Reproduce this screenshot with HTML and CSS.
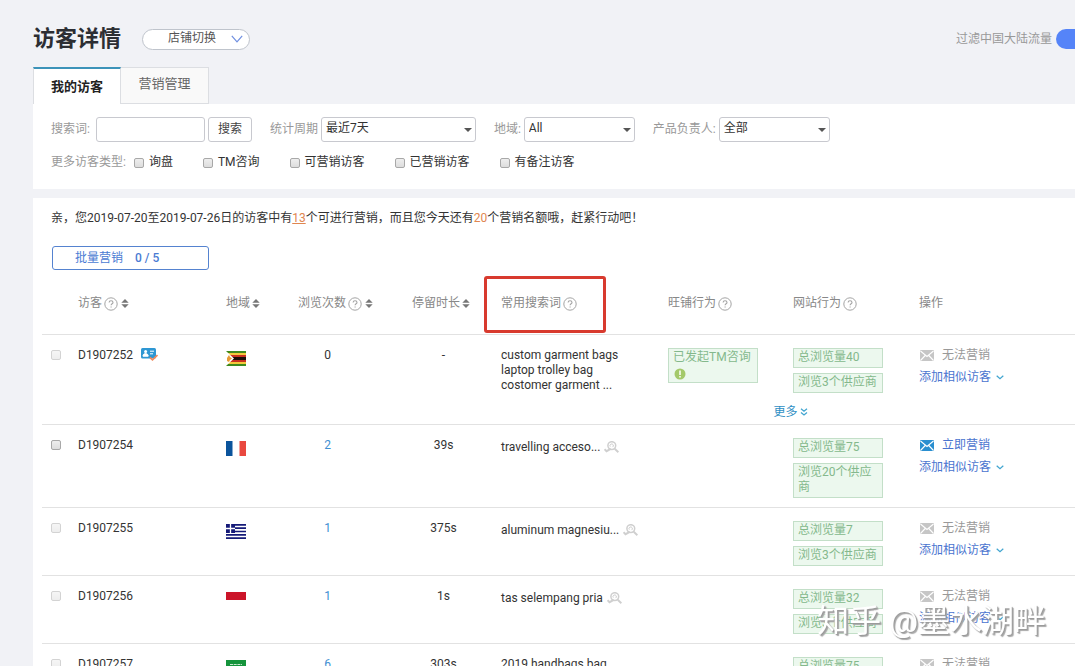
FILE: index.html
```html
<!DOCTYPE html>
<html lang="zh-CN">
<head>
<meta charset="utf-8">
<title>访客详情</title>
<link rel="stylesheet" href="styles.css">
</head>
<body>
<svg class="sprite" aria-hidden="true">
  <symbol id="help" viewBox="0 0 14 14"><circle cx="7" cy="7" r="6.200" fill="none" stroke="#a4a4a4"/><path d="M5.1 5.600c0-2.600 3.900-2.400 3.900-.2 0 1.400-1.900 1.400-1.900 2.900M7.100 9.500v1" fill="none" stroke="#a4a4a4" stroke-width="1.100"/></symbol>
  <symbol id="sort" viewBox="0 0 8 9"><path d="M4 0l3.700 3.800H.3zM4 9L.3 5.200h7.400z" fill="#777"/></symbol>
  <symbol id="mail" viewBox="0 0 14 11"><rect width="14" height="11" rx="1" fill="currentColor"/><path d="M.5 1l6.500 5.500L13.500 1M.5 10.500l4.700-5M13.500 10.500l-4.700-5" fill="none" stroke="#fff" stroke-width="1.100"/></symbol>
  <symbol id="chev" viewBox="0 0 8 5"><path d="M.7.7L4 3.800 7.300.7" fill="none" stroke="#41a5d0" stroke-width="1.200"/></symbol>
  <symbol id="lookup" viewBox="0 0 15 12"><g fill="none" stroke="#cfcfcf"><circle cx="7.800" cy="4.600" r="3.900" stroke-width="1.500"/><path d="M10.700 7.700l3.700 3.500" stroke-width="1.900"/><path d="M6.300 5.600a1.700 1.700 0 1 1 2.200.5" stroke-width="1"/><path d="M.5 8.200l2 2 4.300-2.300" stroke-width="2"/></g></symbol>
</svg>

<header class="page-head">
  <h1 class="title">访客详情</h1>
  <button class="shop-switch" type="button"><span>店铺切换</span>
    <svg width="12" height="8" viewBox="0 0 12 8"><path d="M.8.8L6 6.800 11.200.8" fill="none" stroke="#6f8fe0" stroke-width="1.200"/></svg>
  </button>
  <label class="flow-filter"><span>过滤中国大陆流量</span><input class="toggle" type="checkbox" role="switch" checked></label>
</header>

<nav class="tabs">
  <a class="tab tab-on" href="#mine">我的访客</a>
  <a class="tab" href="#manage">营销管理</a>
</nav>

<form class="panel filters">
  <div class="filter-row">
    <div class="field">
      <label for="kw">搜索词:</label>
      <div class="search"><input class="box" id="kw" type="text"><button class="box search-btn" type="button">搜索</button></div>
    </div>
    <div class="field tight"><label for="period">统计周期</label><select class="box period" id="period"><option>最近7天</option></select></div>
    <div class="field tight"><label for="region">地域:</label><select class="box" id="region"><option>All</option></select></div>
    <div class="field tight"><label for="owner">产品负责人:</label><select class="box" id="owner"><option>全部</option></select></div>
  </div>
  <fieldset class="types">
    <legend>更多访客类型:</legend>
    <label><input class="check" type="checkbox">询盘</label>
    <label><input class="check" type="checkbox">TM咨询</label>
    <label><input class="check" type="checkbox">可营销访客</label>
    <label><input class="check" type="checkbox">已营销访客</label>
    <label><input class="check" type="checkbox">有备注访客</label>
  </fieldset>
</form>

<main class="panel visitors">
  <p class="notice">亲，您2019-07-20至2019-07-26日的访客中有<a href="#ready">13</a>个可进行营销，而且您今天还有<em>20</em>个营销名额哦，赶紧行动吧！</p>
  <button class="batch" type="button"><span>批量营销</span><b>0 / 5</b></button>

  <table class="grid">
    <colgroup><col class="c-check"><col class="c-id"><col class="c-flag"><col class="c-views"><col class="c-stay"><col class="c-words"><col class="c-shop"><col class="c-site"><col></colgroup>
    <thead>
      <tr>
        <th></th>
        <th><span class="head">访客<svg class="i-help"><use href="#help"/></svg><svg class="i-sort"><use href="#sort"/></svg></span></th>
        <th><span class="head">地域<svg class="i-sort"><use href="#sort"/></svg></span></th>
        <th><span class="head">浏览次数<svg class="i-help"><use href="#help"/></svg><svg class="i-sort"><use href="#sort"/></svg></span></th>
        <th><span class="head">停留时长<svg class="i-sort"><use href="#sort"/></svg></span></th>
        <th class="marked"><span class="head">常用搜索词<svg class="i-help"><use href="#help"/></svg></span></th>
        <th><span class="head">旺铺行为<svg class="i-help"><use href="#help"/></svg></span></th>
        <th><span class="head">网站行为<svg class="i-help"><use href="#help"/></svg></span></th>
        <th><span class="head">操作</span></th>
      </tr>
    </thead>
    <tbody>
      <tr class="has-more">
        <td><input class="check" type="checkbox" aria-label="D1907252" disabled></td>
        <td><span class="visitor">D1907252
          <svg width="17" height="13" viewBox="0 0 17 13"><rect y="0" width="15" height="10.500" rx="1.500" fill="#2e97d3"/><circle cx="4.600" cy="3.500" r="1.500" fill="#fff"/><path d="M2 8.200c0-3.600 5.200-3.600 5.200 0zM9 3.200h4M9 5.800h3" fill="#fff" stroke="#fff"/><path d="M9 9.500l2.500 2.300 5-4.800" fill="none" stroke="#f08a5d" stroke-width="1.700"/></svg></span></td>
        <td><svg class="flag" viewBox="0 0 20 15"><path fill="#3f8a1e" d="M0 0h20v15H0z"/><path fill="#f4c93c" d="M2 2h18v11H2z"/><path fill="#c8321f" d="M4 4h16v7H4z"/><path fill="#1b0d08" d="M5 6h15v3H5z"/><path fill="#fff" d="M0 0l8 7.500L0 15z"/><path fill="#e79b35" d="M1 7l2-3 1 2 2 1.500L4 9l-1 2-2-1z"/></svg></td>
        <td class="views">0</td>
        <td class="stay">-</td>
        <td>custom garment bags<br>laptop trolley bag<br>costomer garment ...</td>
        <td colspan="2">
          <div class="actions">
            <div class="tags"><span class="tag">已发起TM咨询<svg class="alert" viewBox="0 0 12 12"><circle cx="6" cy="6" r="5.500" fill="#a4c96a"/><path d="M6 2.500v4.500M6 8v1.500" stroke="#fff" stroke-width="1.500"/></svg></span></div>
            <div class="tags"><span class="tag">总浏览量40</span><span class="tag">浏览3个供应商</span></div>
          </div>
          <a class="more" href="#more">更多<svg width="8" height="8" viewBox="0 0 8 8"><path d="M1 .8l3 2.400L7 .8M1 4.500l3 2.400 3-2.400" fill="none" stroke="#41a5d0" stroke-width="1.300"/></svg></a>
        </td>
        <td><div class="op off"><svg class="i-mail"><use href="#mail"/></svg>无法营销</div><a class="add" href="#add">添加相似访客<svg class="i-chev"><use href="#chev"/></svg></a></td>
      </tr>
      <tr>
        <td><input class="check" type="checkbox" aria-label="D1907254"></td>
        <td>D1907254</td>
        <td><svg class="flag" viewBox="0 0 20 15"><path fill="#fff" d="M0 0h20v15H0z"/><path fill="#0b549c" d="M0 0h6.500v15H0z"/><path fill="#e9483f" d="M13.500 0H20v15h-6.500z"/></svg></td>
        <td class="views"><a href="#views">2</a></td>
        <td class="stay">39s</td>
        <td><span class="word">travelling acceso...<svg class="i-look"><use href="#lookup"/></svg></span></td>
        <td></td>
        <td><div class="tags"><span class="tag">总浏览量75</span><span class="tag">浏览20个供应商</span></div></td>
        <td><a class="op" href="#send"><svg class="i-mail"><use href="#mail"/></svg>立即营销</a><a class="add" href="#add">添加相似访客<svg class="i-chev"><use href="#chev"/></svg></a></td>
      </tr>
      <tr>
        <td><input class="check" type="checkbox" aria-label="D1907255" disabled></td>
        <td>D1907255</td>
        <td><svg class="flag" viewBox="0 0 20 15"><path fill="#fff" d="M0 0h20v15H0z"/><path stroke="#151a78" stroke-width="1.700" d="M0 .8h20M0 4.200h20M0 7.500h20M0 10.800h20M0 14.200h20"/><path fill="#151a78" d="M0 0h9v9H0z"/><path stroke="#fff" stroke-width="1.300" d="M4.500 0v9M0 4.500h9"/></svg></td>
        <td class="views"><a href="#views">1</a></td>
        <td class="stay">375s</td>
        <td><span class="word">aluminum magnesiu...<svg class="i-look"><use href="#lookup"/></svg></span></td>
        <td></td>
        <td><div class="tags"><span class="tag">总浏览量7</span><span class="tag">浏览3个供应商</span></div></td>
        <td><div class="op off"><svg class="i-mail"><use href="#mail"/></svg>无法营销</div><a class="add" href="#add">添加相似访客<svg class="i-chev"><use href="#chev"/></svg></a></td>
      </tr>
      <tr>
        <td><input class="check" type="checkbox" aria-label="D1907256" disabled></td>
        <td>D1907256</td>
        <td><svg class="flag" viewBox="0 0 20 15"><path fill="#fff" d="M0 0h20v15H0z"/><path fill="#cb1429" d="M0 0h20v8H0z"/></svg></td>
        <td class="views"><a href="#views">1</a></td>
        <td class="stay">1s</td>
        <td><span class="word">tas selempang pria<svg class="i-look"><use href="#lookup"/></svg></span></td>
        <td></td>
        <td><div class="tags"><span class="tag">总浏览量32</span><span class="tag">浏览3个供应商</span></div></td>
        <td><div class="op off"><svg class="i-mail"><use href="#mail"/></svg>无法营销</div><a class="add" href="#add">添加相似访客<svg class="i-chev"><use href="#chev"/></svg></a></td>
      </tr>
      <tr>
        <td><input class="check" type="checkbox" aria-label="D1907257" disabled></td>
        <td>D1907257</td>
        <td><svg class="flag" viewBox="0 0 20 15"><path fill="#15943c" d="M0 0h20v15H0z"/><path d="M4 4.500h12M5 6.500h10M5 11h10" stroke="#c9e8d0" stroke-dasharray="3 .7"/></svg></td>
        <td class="views"><a href="#views">6</a></td>
        <td class="stay">303s</td>
        <td>2019 handbags bag</td>
        <td></td>
        <td><div class="tags"><span class="tag">总浏览量75</span></div></td>
        <td><div class="op off"><svg class="i-mail"><use href="#mail"/></svg>无法营销</div></td>
      </tr>
    </tbody>
  </table>
</main>
<div class="watermark">知乎 @墨水湖畔</div>
</body>
</html>
```
FILE: styles.css
```css
*, *::after { box-sizing: border-box; }
html { scrollbar-width: none; }
body {
  margin: 0;
  padding-left: 33px;
  overflow-x: hidden;
  background: #f1f2f6;
  color: #333;
  font: 12px/15px Roboto, "Noto Sans CJK SC", sans-serif;
}
a { color: #4a74cf; text-decoration: none; }
button, input, select { font: inherit; color: inherit; margin: 0; }
button { cursor: pointer; }
svg { display: block; flex: none; }
.sprite { position: absolute; width: 0; height: 0; }

.page-head { display: flex; align-items: center; padding-top: 22px; height: 56px; }
.title { margin: 0; font-size: 22px; line-height: 32px; color: #2c2e33; }
.shop-switch {
  display: flex; align-items: center; justify-content: flex-end; gap: 15px;
  width: 108px; height: 21px; margin-left: 21px; padding: 0 6px;
  border: 1px solid #bfc4cc; border-radius: 11px; background: #fff; color: #555;
}
.shop-switch span { padding-bottom: 2px; }
.flow-filter { display: flex; align-items: center; gap: 4px; margin-left: auto; margin-right: -19px; color: #999; }
.toggle { appearance: none; width: 38px; height: 20px; border-radius: 10px; background: #5584f8; }

.tabs { display: flex; align-items: flex-end; margin-top: 11px; }
.tab {
  width: 88px; height: 37px; padding-bottom: 4px;
  display: flex; align-items: center; justify-content: center;
  border: 1px solid #dcdee2; border-left: 0;
  background: #f9f9f9; color: #666; font-size: 13px;
}
.tab-on { padding-bottom: 0; border-left: 1px solid #dcdee2; border-bottom: 0; border-top: 2px solid #3c93b9; background: #fff; color: #222; font-weight: bold; }

.panel { background: #fff; }
.filters { padding: 13px 18px 19px; }
.filter-row { display: flex; flex-wrap: wrap; gap: 18px; color: #999; }
.field { display: flex; align-items: center; gap: 6px; }
.tight { gap: 3px; }
.search { display: flex; gap: 3px; }
.box { width: 111px; height: 25px; border: 1px solid #c8c9cf; border-radius: 3px; background: #fff; color: #333; }
.search .box { width: 109px; }
.search .search-btn { width: 44px; padding: 0; color: #444; }
.box:is(select) {
  appearance: none; padding: 0 4px 3px;
  background: url("data:image/svg+xml,%3Csvg xmlns='http://www.w3.org/2000/svg' width='8' height='4'%3E%3Cpath d='M0 0h8L4 4z' fill='%23555'/%3E%3C/svg%3E") no-repeat right 3px top 10px;
}
.period { width: 155px; }
.types { display: flex; flex-wrap: wrap; gap: 30px; margin: 13px 0 0; padding: 0; border: 0; }
.types legend { float: left; margin-right: -22px; padding: 0; color: #999; }
.types label { display: flex; align-items: center; gap: 5px; }
.check {
  appearance: none; display: block; width: 10px; height: 10px;
  border: 1px solid #a8a8a8; border-radius: 2px; background: linear-gradient(#eee, #ddd);
}
.check:disabled { opacity: 0.5; }

.visitors { margin-top: 9px; padding: 13px 0 0 9px; }
.notice { margin: 0 0 20px 9px; }
.notice a { color: #e08650; text-decoration: underline; }
.notice em { color: #e08650; font-style: normal; }
.batch {
  display: flex; align-items: center; gap: 12px; width: 157px; height: 24px;
  margin: 0 0 4px 10px; padding: 0 22px;
  border: 1px solid #5583d0; border-radius: 3px; background: #fff; color: #4a7bd3;
}
.batch b { font-weight: 500; }

.grid { width: 100%; table-layout: fixed; border-collapse: collapse; }
.c-check { width: 26px; }
.c-id { width: 148px; }
.c-flag { width: 72px; }
.c-views { width: 114px; }
.c-stay { width: 89px; }
.c-words { width: 167px; }
.c-shop { width: 125px; }
.c-site { width: 126px; }
th, td { padding: 13px 0 9px 9px; text-align: left; vertical-align: top; border-bottom: 1px solid #e2e2e2; }
td + td, th + th { padding-left: 10px; }
th { height: 60px; padding-block: 0; vertical-align: middle; color: #888; font-weight: normal; }
.head { display: flex; align-items: center; gap: 2px; white-space: nowrap; }
.i-help { width: 14px; height: 14px; }
.i-sort { width: 8px; height: 9px; }
.i-help + .i-sort { margin-left: 1px; }
.marked { position: relative; }
.marked::after {
  content: ""; position: absolute; left: -7px; top: 2px; width: 122px; height: 57px;
  border: 3px solid #d83a2e; border-radius: 3px;
}
td .check { margin-top: 2px; }
.flag { width: 20px; height: 15px; margin-top: 3px; }
.visitor { display: flex; gap: 8px; }
td.views { padding-left: 0; padding-right: 35px; text-align: center; }
.views a { color: #3f8fd2; }
td.stay { padding-left: 0; padding-right: 6px; text-align: center; }
.word { display: flex; align-items: center; gap: 4px; padding-top: 2px; }
.i-look { width: 15px; height: 12px; }
.actions { display: grid; grid-template-columns: 125px 1fr; }
.tags { display: grid; gap: 5px; align-content: start; }
.tag { width: 90px; padding: 1px 4px 2px; border: 1px solid #c3dfc8; background: #ecf8ee; color: #84b88c; }
.alert { width: 12px; height: 12px; margin: 3px 0 0 1px; }
.has-more td { padding-bottom: 2px; }
.more { display: flex; align-items: center; justify-content: center; gap: 2px; margin-top: 9px; padding-left: 4px; line-height: 20px; color: #2f8fc4; }
.op { display: flex; align-items: center; gap: 8px; margin-bottom: 7px; }
.off { color: #999; }
.i-mail { width: 14px; height: 11px; margin-left: 1px; color: #2a8fd0; }
.off .i-mail { color: #c6c6c6; }
.add { display: flex; align-items: center; gap: 5px; }
.i-chev { width: 8px; height: 5px; }

.watermark {
  position: fixed; right: 29px; bottom: 22px;
  font-size: 32px; line-height: 46px; color: #fff; white-space: nowrap; pointer-events: none;
  text-shadow: 1px 1px 1px #999, 2px 2px 1px #aaa;
}
```
